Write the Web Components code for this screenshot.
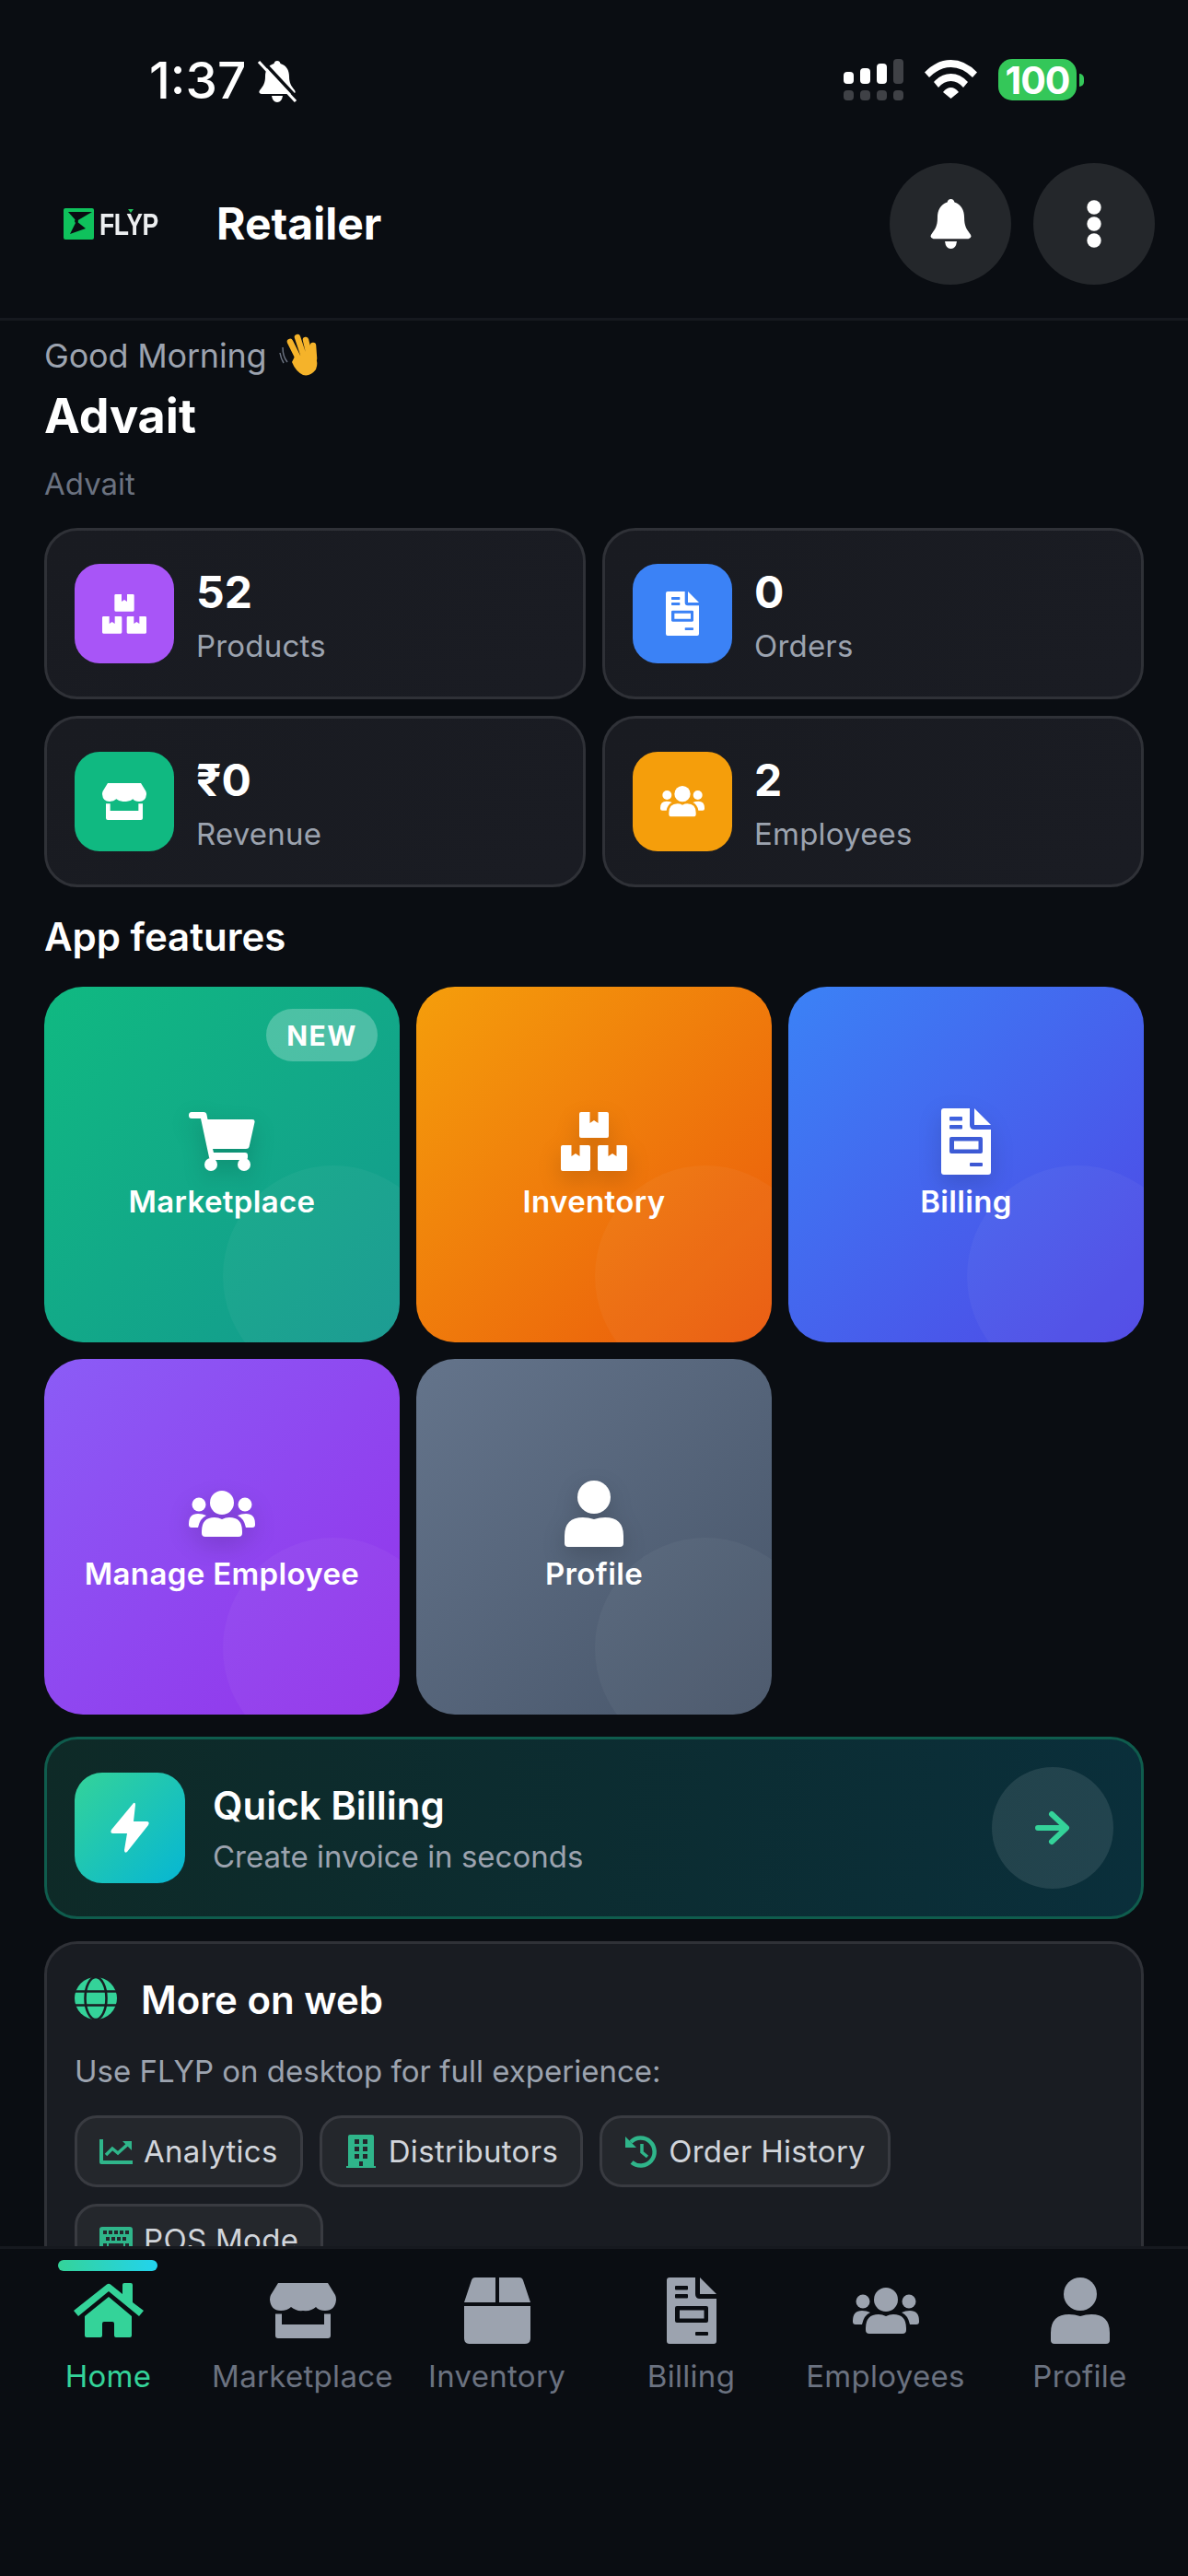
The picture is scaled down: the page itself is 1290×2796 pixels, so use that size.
<!DOCTYPE html>
<html lang="en">
<head>
<meta charset="utf-8">
<title>FLYP Retailer</title>
<style>
  html, body { margin: 0; background: #0a0d12; }
  body { font-family: Inter, "Noto Sans", sans-serif; color: #fff; }
</style>
</head>
<body>
<flyp-app></flyp-app>

<script>
  // paths are drawn in real pixels of the 1290 wide screen
  const box = (x, y) => `M${x+2} ${y}H${x+11.5}V${y+12}L${x+16} ${y+9}L${x+20.5} ${y+12}V${y}H${x+30}Q${x+32} ${y} ${x+32} ${y+2}V${y+26}Q${x+32} ${y+28} ${x+30} ${y+28}H${x+2}Q${x} ${y+28} ${x} ${y+26}V${y+2}Q${x} ${y} ${x+2} ${y}Z`;
  const bell = 'M21 0C23 0 24 1 24.5 3C31 5 34 10 34 17C34 24 36 27 40 32Q42 35 38 36H4Q0 35 2 32C6 27 8 24 8 17C8 10 11 5 17.5 3C18 1 19 0 21 0Z';

  const ICONS = {
    boxes: [72, 64, `<path d="${box(20, 0)}${box(0, 36)}${box(40, 36)}"/>`],
    doc: [54, 72, `<path fill-rule="evenodd" d="M3 0H31V18Q31 23 36 23H54V69Q54 72 51 72H3Q0 72 0 69V3Q0 0 3 0Z
      M10 9H22Q23 9 23 10V12.500Q23 13.500 22 13.500H10Q9 13.500 9 12.500V10Q9 9 10 9Z
      M10 18H22Q23 18 23 19V21.500Q23 22.500 22 22.500H10Q9 22.500 9 21.500V19Q9 18 10 18Z
      M11 31H43Q45 31 45 33V47Q45 49 43 49H11Q9 49 9 47V33Q9 31 11 31Z
      M14 35.500V44.500H40.500V35.500Z
      M32 59H44Q45 59 45 60V62Q45 63 44 63H32Q31 63 31 62V60Q31 59 32 59Z"/><path d="M36 0L54 18H36Z"/>`],
    store: [72, 60, `<path d="M9 0H63L71 13Q72 15 72 18Q71 30 60 30Q53 30 50 26Q45 31 36 30Q29 31 23 26Q19 30 12 30Q1 30 0 18Q0 15 1 13ZM6 33.500H13V45H59V33.500H66V57Q66 60 63 60H9Q6 60 6 57Z"/>`],
    people: [72, 50, `<circle cx="36" cy="13" r="13"/><circle cx="11" cy="15" r="7.500"/><circle cx="61" cy="15" r="7.500"/>
      <path d="M14 44Q14 29 28 29Q32 29 36 31Q40 29 44 29Q58 29 58 44V46Q58 50 54 50H18Q14 50 14 46Z
      M0 36Q0 25 10 25Q15 25 19 27Q12 30 10 40H3Q0 40 0 37Z M72 36Q72 25 62 25Q57 25 53 27Q60 30 62 40H69Q72 40 72 37Z"/>`],
    person: [64, 72, `<circle cx="32" cy="18" r="18"/><path d="M0 60Q0 40 20 40Q26 40 32 42Q38 40 44 40Q64 40 64 60V68Q64 72 60 72H4Q0 72 0 68Z"/>`],
    cart: [72, 64, `<path d="M3 0H16Q19 0 19.500 3L20.500 8H69Q72 8 71.500 11L65.500 38Q65 40 62 40H26L27 44H61Q64 44 64 47V49Q64 52 61 52H25Q22.500 52 22 49L13 7H3Q0 7 0 3.500Q0 0 3 0Z"/><circle cx="24" cy="57" r="7"/><circle cx="60" cy="57" r="7"/>`],
    home: [76, 60, `<path d="M0 30L36 1.500Q38 0 40 1.500L53 12V2Q53 0 55 0H62Q64 0 64 2V21L76 30L71 36L38 9L5 36Z"/><path d="M38 15L63 36V57Q63 59 61 59H46Q44 59 44 57V44Q44 42 42 42H33Q31 42 31 44V57Q31 59 29 59H14Q12 59 12 57V36Z"/>`],
    parcel: [72, 72, `<path d="M0 27L8 3Q9 0 12 0H34V27ZM38 0H60Q63 0 64 3L72 27H38ZM0 31H72V66Q72 72 66 72H6Q0 72 0 66Z"/>`],
    bolt: [42, 54, `<path d="M25 0Q27 -1 27 2L25 20H39Q43 20 41 24L18 53Q15 55 15 51L18 33H3Q-1 33 1 29Z"/>`],
    arrow: [37, 36, `<path d="M2 18H32M17 3L33 18L17 33" fill="none" stroke="currentColor" stroke-width="6" stroke-linecap="round" stroke-linejoin="round"/>`],
    chart: [36, 27, `<path d="M0 0H4V23H36V27H2Q0 27 0 25Z"/><path d="M7 17L14 10L20 15L30 6" fill="none" stroke="currentColor" stroke-width="3.500"/><path d="M25 2H35V12Z"/>`],
    building: [32, 36, `<path fill-rule="evenodd" d="M4 0H28Q30 0 30 2V34H32V36H0V34H2V2Q2 0 4 0Z
      M9 5V10H14V5ZM18 5V10H23V5ZM9 13V18H14V13ZM18 13V18H23V13ZM9 21V26H14V21ZM18 21V26H23V21ZM14 29V34H18V29Z"/>`],
    history: [36, 36, `<path d="M7 8A15 15 0 1 1 8 30" fill="none" stroke="currentColor" stroke-width="4.500"/><path d="M1 2V14H13Z"/><path d="M19 10V19L25 24" fill="none" stroke="currentColor" stroke-width="3.500"/>`],
    keyboard: [36, 28, `<path fill-rule="evenodd" d="M3 0H33Q36 0 36 3V25Q36 28 33 28H3Q0 28 0 25V3Q0 0 3 0Z
      M4 4V8H8V4ZM10 4V8H14V4ZM16 4V8H20V4ZM22 4V8H26V4ZM28 4V8H32V4ZM7 11V15H11V11ZM13 11V15H17V11ZM19 11V15H23V11ZM25 11V15H29V11ZM4 18V23H8V18ZM10 18V23H26V18ZM28 18V23H32V18Z"/>`],
    globe: [46, 46, `<circle cx="23" cy="23" r="23"/><g fill="none" stroke="#191c22" stroke-width="2.600"><ellipse cx="23" cy="23" rx="11.500" ry="23"/><path d="M0 15.500H46M0 30.500H46"/></g>`],
    bell: [47, 54, `<path transform="scale(1.12 1.2)" d="${bell}"/><path d="M17 46H30Q29 54 23.500 54Q18 54 17 46Z"/>`],
    dots: [16, 52, `<circle cx="8" cy="8" r="7.700"/><circle cx="8" cy="26" r="7.700"/><circle cx="8" cy="44" r="7.700"/>`],
    mute: [42, 45, `<path d="${bell}"/><path d="M15 38H27Q26 45 21 45Q16 45 15 38Z"/><path d="M4 -1L44 42" stroke="#0a0d12" stroke-width="3.500"/><path d="M1 1L41 44" stroke="#fff" stroke-width="3.200"/>`],
    wifi: [57, 42, `<path d="M0 13.500Q13 0 28.500 0Q44 0 57 13.500L52 19Q41 8 28.500 8Q16 8 5 19Z"/><path d="M10 24Q18 15 28.500 15Q39 15 47 24L42 30Q36 23 28.500 23Q21 23 15 30Z"/><path d="M20 35Q24 30 28.500 30Q33 30 37 35L28.500 42Z"/>`],
    wave: [48, 46, `<g stroke="#f5b32a" stroke-width="6.500" stroke-linecap="round"><path d="M22 28L12 8M27 24L20 3M33 23L29 6M38 26L37 12"/></g><path d="M17 24L39 22Q43 31 40 38Q34 46 26 44Q18 40 14 30Z" fill="#f5b32a"/><path d="M4 14Q4 24 9 30M1 20Q2 26 5 31" fill="none" stroke="#6b7280" stroke-width="1.500"/>`]
  };

  class AppIcon extends HTMLElement {
    connectedCallback() {
      const [w, h, body] = ICONS[this.getAttribute('name')];
      const scale = parseFloat(this.getAttribute('scale') || 1);
      this.attachShadow({ mode: 'open' });
      this.shadowRoot.innerHTML = `
        <style>
          :host { display: flex; align-items: center; justify-content: center; flex: none; }
          svg { display: block; fill: currentColor; overflow: visible; }
        </style>
        <svg width="${w * scale}" height="${h * scale}" viewBox="0 0 ${w} ${h}">${body}</svg>
      `;
    }
  }
  customElements.define('app-icon', AppIcon);

  class StatusBar extends HTMLElement {
    constructor() {
      super();
      this.attachShadow({ mode: 'open' });
      this.shadowRoot.innerHTML = `
        <style>
          :host { display: flex; justify-content: space-between; height: 150px; box-sizing: border-box; padding: 60px 113px 0 162px; color: #fff; }
          .left, .right { display: flex; align-items: flex-start; }
          .left { gap: 13px; }
          .time { font-size: 55px; line-height: 46px; font-weight: 500; letter-spacing: 0; padding-top: 4px; }
          .left app-icon { margin-top: 6px; }
          .right { gap: 23px; padding-top: 4px; }
          .signal { display: grid; grid-template-columns: repeat(4, 11px); grid-template-rows: 27px 11px; column-gap: 7px; row-gap: 7px; }
          .signal i { display: block; border-radius: 4px; background: #fff; align-self: end; }
          .signal i.off { background: #3f4146; }
          .wifi { margin-top: 1px; }
          .batt { display: flex; align-items: center; gap: 3px; }
          .cell { width: 85px; height: 45px; border-radius: 15px; background: #34c759; display: flex; align-items: center; justify-content: center; font-size: 41px; font-weight: 700; letter-spacing: -1px; }
          .nub { width: 5px; height: 14px; border-radius: 0 5px 5px 0; background: #34c759; }
        </style>
        <div class="left"><span class="time">1:37</span><app-icon name="mute"></app-icon></div>
        <div class="right">
          <div class="signal">
            <i style="height:13px"></i><i style="height:17px"></i><i style="height:22px"></i><i class="off" style="height:27px"></i>
            <i class="off" style="height:11px"></i><i class="off" style="height:11px"></i><i class="off" style="height:11px"></i><i class="off" style="height:11px"></i>
          </div>
          <app-icon class="wifi" name="wifi"></app-icon>
          <div class="batt"><div class="cell">100</div><div class="nub"></div></div>
        </div>
      `;
    }
  }
  customElements.define('status-bar', StatusBar);

  class AppHeader extends HTMLElement {
    constructor() {
      super();
      this.attachShadow({ mode: 'open' });
      this.shadowRoot.innerHTML = `
        <style>
          :host { display: flex; align-items: center; box-sizing: border-box; height: 198px; padding: 27px 36px 36px 69px; border-bottom: 3px solid #16191f; }
          .logo { display: flex; align-items: center; gap: 6px; width: 166px; flex: none; position: relative; }
          .mark { display: block; flex: none; }
          .word { display: inline-block; font-size: 34px; line-height: 34px; font-weight: 700; color: #eceef0; transform: scaleX(.78); transform-origin: left center; letter-spacing: -.5px; font-family: "Liberation Sans", sans-serif; }
          .tick { position: absolute; left: 70px; top: 1px; width: 0; height: 0; border: 3px solid transparent; border-top: 4px solid #22c55e; }
          h1 { margin: 0; font-size: 48px; line-height: 58px; font-weight: 700; flex: 1; }
          .actions { display: flex; gap: 24px; }
          .btn { width: 132px; height: 132px; border-radius: 50%; background: #24272b; display: flex; align-items: center; justify-content: center; color: #fff; }
        </style>
        <div class="logo">
          <svg class="mark" width="33" height="34" viewBox="0 0 33 34">
            <rect width="33" height="34" rx="2" fill="#0fc25c"/>
            <path d="M5 4H31L14 14Z" fill="#0a0d12"/>
            <path d="M7 28L14 14L24 22Z" fill="#0a0d12"/>
            <circle cx="14" cy="14" r="2" fill="#0a0d12"/>
          </svg>
          <span class="word">FLYP</span><span class="tick"></span>
        </div>
        <h1><slot></slot></h1>
        <div class="actions">
          <div class="btn"><app-icon name="bell"></app-icon></div>
          <div class="btn"><app-icon name="dots"></app-icon></div>
        </div>
      `;
    }
  }
  customElements.define('app-header', AppHeader);

  class StatCard extends HTMLElement {
    constructor() {
      super();
      this.attachShadow({ mode: 'open' });
      this.shadowRoot.innerHTML = `
        <style>
          :host { display: flex; align-items: center; gap: 24px; height: 186px; box-sizing: border-box; padding: 0 30px; border: 3px solid #2f3137; border-radius: 36px; background: linear-gradient(135deg, #191b21, #1a1c23); }
          .tile { width: 108px; height: 108px; border-radius: 27px; background: var(--c); display: flex; align-items: center; justify-content: center; color: #fff; flex: none; }
          .col { padding-top: 11px; }
          .value { font-size: 48px; line-height: 58px; font-weight: 700; margin-top: -6px; }
          .label { font-size: 33px; line-height: 44px; color: #9ca3af; margin-top: 7px; letter-spacing: .2px; }
        </style>
        <div class="tile"><slot name="icon"></slot></div>
        <div class="col">
          <div class="value" id="value"></div>
          <div class="label" id="label"></div>
        </div>
      `;
    }
    connectedCallback() {
      this.style.setProperty('--c', this.getAttribute('color'));
      this.shadowRoot.getElementById('value').textContent = this.getAttribute('value');
      this.shadowRoot.getElementById('label').textContent = this.getAttribute('label');
    }
  }
  customElements.define('stat-card', StatCard);

  class FeatureTile extends HTMLElement {
    constructor() {
      super();
      this.attachShadow({ mode: 'open' });
      this.shadowRoot.innerHTML = `
        <style>
          :host { display: flex; flex-direction: column; align-items: center; justify-content: center; gap: 7px; height: 386px; border-radius: 42px; position: relative; overflow: hidden; color: #fff; background: linear-gradient(135deg, var(--from), var(--to)); }
          .blob { position: absolute; right: -48px; bottom: -48px; width: 240px; height: 240px; border-radius: 50%; background: rgba(255,255,255,.04); }
          .icon { height: 72px; display: flex; align-items: center; filter: drop-shadow(0 9px 12px rgba(0,0,0,.16)); position: relative; }
          .name { font-size: 33px; line-height: 44px; font-weight: 600; position: relative; letter-spacing: .35px; }
          .new { position: absolute; top: 24px; right: 24px; height: 57px; width: 121px; border-radius: 29px; background: rgba(255,255,255,.25); display: flex; align-items: center; justify-content: center; font-size: 30px; font-weight: 700; letter-spacing: 1.500px; }
        </style>
        <div class="blob"></div>
        <div class="icon"><slot></slot></div>
        <div class="name" id="name"></div>
      `;
    }
    connectedCallback() {
      this.style.setProperty('--from', this.getAttribute('from'));
      this.style.setProperty('--to', this.getAttribute('to'));
      this.shadowRoot.getElementById('name').textContent = this.getAttribute('label');
      if (this.hasAttribute('new')) {
        const badge = document.createElement('div');
        badge.className = 'new';
        badge.textContent = 'NEW';
        this.shadowRoot.appendChild(badge);
      }
    }
  }
  customElements.define('feature-tile', FeatureTile);

  class QuickBilling extends HTMLElement {
    constructor() {
      super();
      this.attachShadow({ mode: 'open' });
      this.shadowRoot.innerHTML = `
        <style>
          :host { display: flex; align-items: center; height: 198px; box-sizing: border-box; padding: 0 30px; border: 3px solid #0f5c4d; border-radius: 36px; background: linear-gradient(100deg, #0e2a27, #0a2f3b); }
          .tile { width: 120px; height: 120px; border-radius: 30px; background: linear-gradient(135deg, #34d399, #06b6d4); display: flex; align-items: center; justify-content: center; color: #fff; flex: none; }
          .text { flex: 1; padding: 5px 0 0 30px; }
          .title { font-size: 42px; line-height: 56px; font-weight: 600; margin-top: -4px; }
          .sub { font-size: 33px; line-height: 44px; color: #9ca3af; margin-top: 5px; }
          .go { width: 132px; height: 132px; border-radius: 50%; background: rgba(255,255,255,.1); display: flex; align-items: center; justify-content: center; color: #34d399; }
        </style>
        <div class="tile"><app-icon name="bolt"></app-icon></div>
        <div class="text"><div class="title">Quick Billing</div><div class="sub">Create invoice in seconds</div></div>
        <div class="go"><app-icon name="arrow"></app-icon></div>
      `;
    }
  }
  customElements.define('quick-billing', QuickBilling);

  class WebChip extends HTMLElement {
    constructor() {
      super();
      this.attachShadow({ mode: 'open' });
      this.shadowRoot.innerHTML = `
        <style>
          :host { display: flex; align-items: center; height: 78px; box-sizing: border-box; padding: 0 24px; gap: 12px; border: 3px solid #393b41; border-radius: 24px; background: #24272c; font-size: 33px; letter-spacing: .3px; color: #d1d5db; }
          .i { width: 36px; display: flex; justify-content: center; color: #2fb58a; }
        </style>
        <div class="i"></div><slot></slot>
      `;
    }
    connectedCallback() {
      this.shadowRoot.querySelector('.i').innerHTML = `<app-icon name="${this.getAttribute('icon')}"></app-icon>`;
    }
  }
  customElements.define('web-chip', WebChip);

  class WebCard extends HTMLElement {
    constructor() {
      super();
      this.attachShadow({ mode: 'open' });
      this.shadowRoot.innerHTML = `
        <style>
          :host { display: block; box-sizing: border-box; padding: 36px 30px; border: 3px solid #2f3137; border-radius: 36px; background: #191c22; }
          .head { display: flex; align-items: center; gap: 26px; height: 46px; color: #34d399; }
          h2 { margin: 3px 0 0; font-size: 42px; line-height: 56px; font-weight: 600; color: #fff; }
          p { margin: 34px 0 26px; font-size: 33px; line-height: 44px; color: #9ca3af; }
          .chips { display: flex; flex-wrap: wrap; gap: 18px; }
        </style>
        <div class="head"><app-icon name="globe"></app-icon><h2>More on web</h2></div>
        <p>Use FLYP on desktop for full experience:</p>
        <div class="chips"><slot></slot></div>
      `;
    }
  }
  customElements.define('web-card', WebCard);

  class NavItem extends HTMLElement {
    constructor() {
      super();
      this.attachShadow({ mode: 'open' });
      this.shadowRoot.innerHTML = `
        <style>
          :host { display: flex; flex-direction: column; align-items: center; position: relative; color: #6b7280; }
          :host([active]) { color: #34d399; }
          .icon { height: 72px; display: flex; align-items: center; color: #9ca3af; }
          :host([active]) .icon { color: #34d399; }
          .label { font-size: 33px; line-height: 44px; margin-top: 13px; white-space: nowrap; letter-spacing: .3px; }
          .bar { display: none; position: absolute; top: -19px; left: 50%; margin-left: -55px; width: 108px; height: 12px; border-radius: 6px; background: linear-gradient(90deg, #34d399, #22d3ee); }
          :host([active]) .bar { display: block; }
        </style>
        <div class="bar"></div>
        <div class="icon"><slot></slot></div>
        <div class="label" id="label"></div>
      `;
    }
    connectedCallback() {
      this.shadowRoot.getElementById('label').textContent = this.getAttribute('label');
    }
  }
  customElements.define('nav-item', NavItem);

  class BottomNav extends HTMLElement {
    constructor() {
      super();
      this.attachShadow({ mode: 'open' });
      this.shadowRoot.innerHTML = `
        <style>
          :host { display: grid; grid-template-columns: repeat(6, 1fr); flex: none; height: 358px; box-sizing: border-box; padding: 31px 12px 0; border-top: 3px solid #16191f; background: #0a0d12; align-content: start; }
        </style>
        <slot></slot>
      `;
    }
  }
  customElements.define('bottom-nav', BottomNav);

  class FlypApp extends HTMLElement {
    constructor() {
      super();
      this.attachShadow({ mode: 'open' });
      this.shadowRoot.innerHTML = `
        <style>
          :host { display: flex; flex-direction: column; width: 1290px; height: 2796px; overflow: hidden; background: #0a0d12; }
          main { flex: 1; min-height: 0; overflow: hidden; padding: 15px 48px 0; }
          .hello { display: flex; align-items: center; gap: 14px; font-size: 36px; line-height: 44px; color: #9ca3af; letter-spacing: -.2px; }
          .name { font-size: 52px; line-height: 64px; font-weight: 700; margin-top: 11px; }
          .sub { font-size: 33px; line-height: 40px; color: #6b7280; margin-top: 21px; }
          .stats { display: grid; grid-template-columns: 1fr 1fr; gap: 18px; margin-top: 28px; }
          h2 { margin: 27px 0; font-size: 42px; line-height: 54px; font-weight: 600; }
          .features { display: grid; grid-template-columns: repeat(3, 1fr); gap: 18px; }
          quick-billing { margin: 24px 0; }
        </style>
        <status-bar></status-bar>
        <app-header>Retailer</app-header>
        <main>
          <div class="hello"><span>Good Morning</span><app-icon name="wave"></app-icon></div>
          <div class="name">Advait</div>
          <div class="sub">Advait</div>
          <div class="stats">
            <stat-card value="52" label="Products" color="#a855f7"><app-icon slot="icon" name="boxes" scale=".667"></app-icon></stat-card>
            <stat-card value="0" label="Orders" color="#3b82f6"><app-icon slot="icon" name="doc" scale=".667"></app-icon></stat-card>
            <stat-card value="₹0" label="Revenue" color="#10b981"><app-icon slot="icon" name="store" scale=".667"></app-icon></stat-card>
            <stat-card value="2" label="Employees" color="#f59e0b"><app-icon slot="icon" name="people" scale=".667"></app-icon></stat-card>
          </div>
          <h2>App features</h2>
          <div class="features">
            <feature-tile label="Marketplace" from="#10b981" to="#14998f" new><app-icon name="cart"></app-icon></feature-tile>
            <feature-tile label="Inventory" from="#f59e0b" to="#ea580c"><app-icon name="boxes"></app-icon></feature-tile>
            <feature-tile label="Billing" from="#3b82f6" to="#4f46e5"><app-icon name="doc"></app-icon></feature-tile>
            <feature-tile label="Manage Employee" from="#8b5cf6" to="#9333ea"><app-icon name="people"></app-icon></feature-tile>
            <feature-tile label="Profile" from="#64748b" to="#475569"><app-icon name="person"></app-icon></feature-tile>
          </div>
          <quick-billing></quick-billing>
          <web-card>
            <web-chip icon="chart">Analytics</web-chip>
            <web-chip icon="building">Distributors</web-chip>
            <web-chip icon="history">Order History</web-chip>
            <web-chip icon="keyboard">POS Mode</web-chip>
          </web-card>
        </main>
        <bottom-nav>
          <nav-item label="Home" active><app-icon name="home"></app-icon></nav-item>
          <nav-item label="Marketplace"><app-icon name="store"></app-icon></nav-item>
          <nav-item label="Inventory"><app-icon name="parcel"></app-icon></nav-item>
          <nav-item label="Billing"><app-icon name="doc"></app-icon></nav-item>
          <nav-item label="Employees"><app-icon name="people"></app-icon></nav-item>
          <nav-item label="Profile"><app-icon name="person"></app-icon></nav-item>
        </bottom-nav>
      `;
    }
  }
  customElements.define('flyp-app', FlypApp);
</script>
</body>
</html>
